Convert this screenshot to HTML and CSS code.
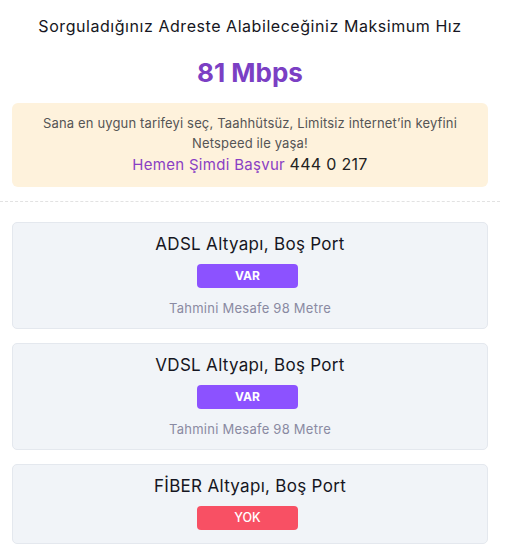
FILE: index.html
```
<!DOCTYPE html>
<html lang="tr">
<head>
<meta charset="utf-8">
<link rel="stylesheet" href="styles.css">
</head>
<body>
<div class="page">
  <h1 class="heading">Sorguladığınız Adreste Alabileceğiniz Maksimum Hız</h1>
  <div class="speed">81 Mbps</div>
  <div class="notice">
    <p class="notice-text">Sana en uygun tarifeyi seç, Taahhütsüz, Limitsiz internet’in keyfini Netspeed ile yaşa!</p>
    <p class="notice-cta"><span class="cta-link">Hemen Şimdi Başvur</span> <span class="cta-phone">444 0 217</span></p>
  </div>
  <hr class="divider">
  <div class="cards">
    <div class="card">
      <div class="card-title">ADSL Altyapı, Boş Port</div>
      <div class="badge badge-yes">VAR</div>
      <div class="distance">Tahmini Mesafe 98 Metre</div>
    </div>
    <div class="card">
      <div class="card-title">VDSL Altyapı, Boş Port</div>
      <div class="badge badge-yes">VAR</div>
      <div class="distance">Tahmini Mesafe 98 Metre</div>
    </div>
    <div class="card card-short">
      <div class="card-title">FİBER Altyapı, Boş Port</div>
      <div class="badge badge-no">YOK</div>
    </div>
  </div>
</div>
</body>
</html>
```

FILE: styles.css
```
* { box-sizing: border-box; }
body {
  margin: 0;
  background: #fff;
  font-family: Inter, "Noto Sans", sans-serif;
  color: #1d1d2b;
}
.page {
  width: 500px;
  padding-top: 14px;
}
.heading {
  margin: 0;
  font-size: 16px;
  line-height: 24px;
  font-weight: 400;
  text-align: center;
  letter-spacing: 0.55px;
  color: #161622;
}
.speed {
  margin-top: 19px;
  font-size: 26px;
  line-height: 32px;
  font-weight: 700;
  text-align: center;
  color: #7b3fc4;
}
.notice {
  margin: 14px 12px 0;
  background: #fef2dc;
  border-radius: 6px;
  padding: 10px 20px 10px;
  text-align: center;
}
.notice-text {
  margin: 0;
  font-size: 13px;
  line-height: 20px;
  letter-spacing: 0.15px;
  color: #555;
}
.notice-cta {
  margin: 0;
  font-size: 15px;
  line-height: 24px;
  height: 24px;
  letter-spacing: 0.3px;
}
.cta-link { color: #8a3fc4; }
.cta-phone { color: #222; font-size: 16px; line-height: 20px; }
.divider {
  margin: 14px 0 0;
  border: 0;
  border-top: 1px dashed #e2e2e2;
  height: 0;
}
.cards {
  display: flex;
  flex-direction: column;
  gap: 14px;
  padding: 20px 12px 0;
}
.card {
  background: #f1f4f8;
  border: 1px solid #e4e8ee;
  border-radius: 5px;
  padding: 8px 10px 10px;
  display: flex;
  flex-direction: column;
  align-items: center;
}
.card-short { padding-bottom: 13px; }
.card-title {
  font-size: 17px;
  line-height: 26px;
  letter-spacing: 0.3px;
  color: #161622;
}
.badge {
  margin-top: 7px;
  margin-right: 5px;
  width: 101px;
  height: 24px;
  border-radius: 4px;
  color: #fff;
  font-size: 12px;
  line-height: 24px;
  text-align: center;
}
.badge-yes { background: #8c52ff; font-weight: 700; }
.badge-no { background: #f85064; font-weight: 500; font-size: 12.5px; }
.distance {
  margin-top: 10px;
  font-size: 13px;
  line-height: 20px;
  letter-spacing: 0.25px;
  color: #8a8aa2;
}
```
